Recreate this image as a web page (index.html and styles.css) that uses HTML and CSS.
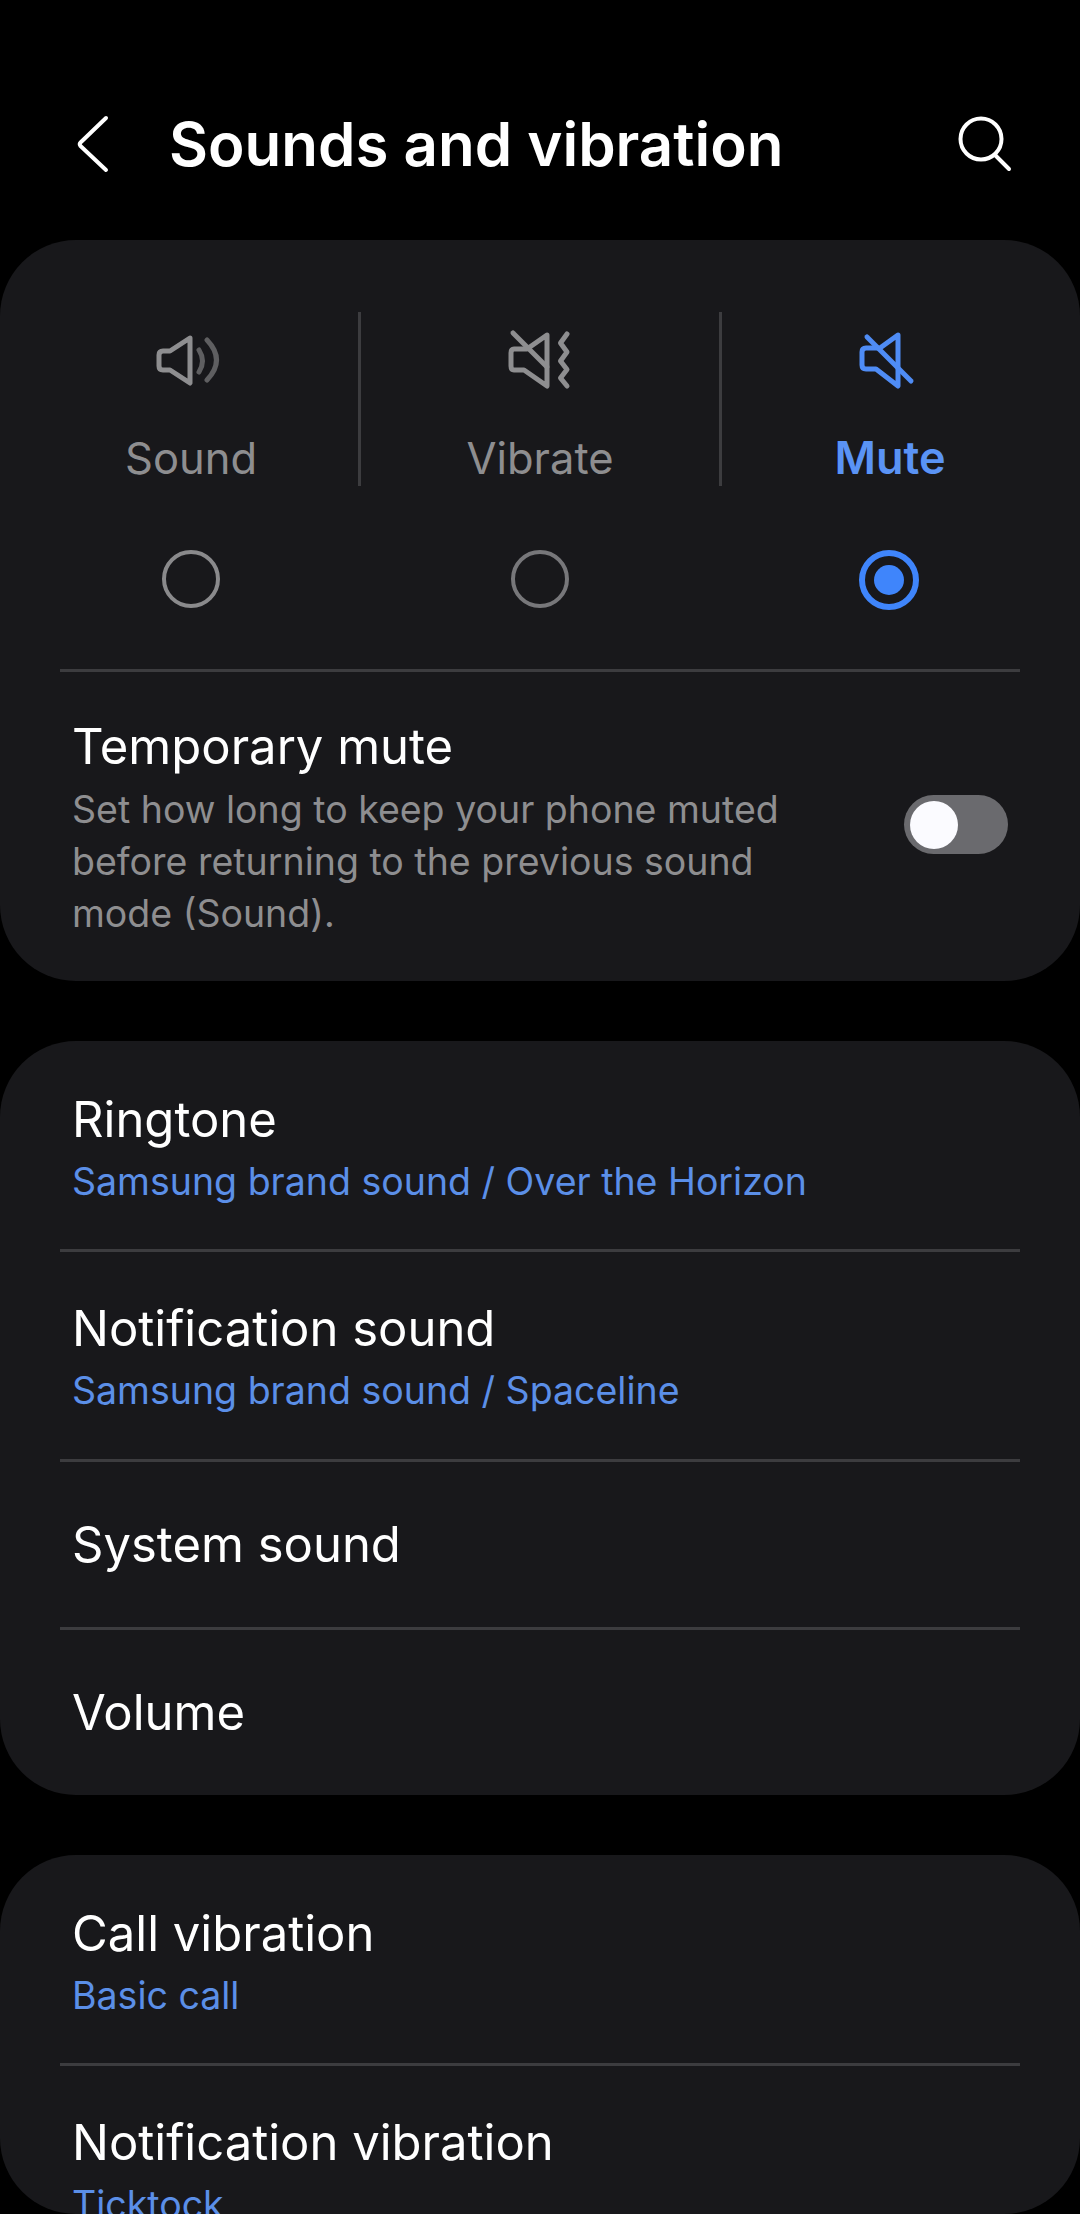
FILE: index.html
```html
<!DOCTYPE html>
<html lang="en">
<head>
    <meta charset="UTF-8">
    <meta name="viewport" content="width=device-width, initial-scale=1.0">
    <title>Sounds and vibration</title>
    <link rel="stylesheet" href="styles.css">
</head>
<body>
    <header class="topbar">
        <svg class="back-icon" width="36" height="60" viewBox="75 114 36 60">
            <path d="M106 118 L80.500 142.500 Q79 144 80.500 146 L106 170"/>
        </svg>
        <h1>Sounds and vibration</h1>
        <svg class="search-icon" width="60" height="60" viewBox="954 114 60 60">
            <circle cx="980" cy="139" r="20.500"/>
            <path d="M994 155 L1008 169"/>
        </svg>
    </header>

    <section class="card">
        <div class="modes">
            <div class="mode">
                <svg class="mode-icon" width="72" height="64" viewBox="155 328 72 64">
                    <path d="M190 338 L170 351 H163 Q159 351 159 355 V366 Q159 370 163 370 H170 L190 383 Z"/>
                    <path class="wave" d="M199 350 Q206 361 199 372"/>
                    <path class="wave" d="M207 340 Q226 360 207 380"/>
                </svg>
                <span class="mode-label">Sound</span>
                <span class="radio"></span>
            </div>
            <div class="mode mode-middle">
                <svg class="mode-icon" width="72" height="64" viewBox="504 328 72 64">
                    <path d="M547 335 L527 349 H514 Q511 349 511 353 V366 Q511 370 514 370 H524 L547 386 Z"/>
                    <path d="M513 333 L547 367"/>
                    <path d="M567 334 L560.500 343 L567 352 L560.500 361 L567 369.500 L560.500 378 L567 386"/>
                </svg>
                <span class="mode-label">Vibrate</span>
                <span class="radio radio-dim"></span>
            </div>
            <div class="mode mode-active">
                <svg class="mode-icon" width="72" height="64" viewBox="853 328 72 64">
                    <path d="M898 335 L880 348 H866 Q862 348 862 352 V365 Q862 369 866 369 H876 L898 386 Z"/>
                    <path d="M867 337 L911 381"/>
                </svg>
                <span class="mode-label">Mute</span>
                <span class="radio radio-on"></span>
            </div>
        </div>
        <div class="row row-switch">
            <div class="row-text">
                <div class="row-title">Temporary mute</div>
                <div class="row-desc">Set how long to keep your phone muted before returning to the previous sound mode (Sound).</div>
            </div>
            <span class="toggle"><span class="thumb"></span></span>
        </div>
    </section>

    <section class="card">
        <div class="row row-double">
            <div class="row-title">Ringtone</div>
            <div class="row-sub">Samsung brand sound / Over the Horizon</div>
        </div>
        <div class="row row-double">
            <div class="row-title">Notification sound</div>
            <div class="row-sub">Samsung brand sound / Spaceline</div>
        </div>
        <div class="row row-single">
            <div class="row-title">System sound</div>
        </div>
        <div class="row row-single">
            <div class="row-title">Volume</div>
        </div>
    </section>

    <section class="card card-last">
        <div class="row row-double">
            <div class="row-title">Call vibration</div>
            <div class="row-sub">Basic call</div>
        </div>
        <div class="row row-double">
            <div class="row-title">Notification vibration</div>
            <div class="row-sub">Ticktock</div>
        </div>
    </section>
</body>
</html>
```

FILE: styles.css
```css
html, body {
    margin: 0;
    padding: 0;
    background-color: #000;
}
body {
    width: 1080px;
    height: 2214px;
    overflow: hidden;
    font-family: Inter, "Noto Sans", sans-serif;
    color: #fff;
}
svg {
    display: block;
    fill: none;
    stroke-linecap: round;
    stroke-linejoin: round;
}

.topbar {
    height: 240px;
    box-sizing: border-box;
    padding: 114px 65px 0 75px;
    display: flex;
    align-items: flex-start;
}
.topbar h1 {
    flex: 1;
    margin: 0 0 0 58px;
    font-size: 60px;
    font-weight: 600;
    line-height: 60px;
}
.back-icon, .search-icon {
    stroke: #fff;
    stroke-width: 4;
}

.card {
    background: #18181b;
    border-radius: 76px;
    margin-bottom: 60px;
}
.card-last {
    height: 359px;
    overflow: hidden;
    margin-bottom: 0;
}

.modes {
    display: flex;
    padding: 72px 23px 0;
}
.mode {
    width: 336px;
    height: 357px;
    display: flex;
    flex-direction: column;
    align-items: center;
    position: relative;
}
.mode-middle {
    width: 362px;
}
.mode-middle::before, .mode-middle::after {
    content: "";
    position: absolute;
    top: 0;
    width: 3px;
    height: 174px;
    background: #3c3c3f;
}
.mode-middle::before {
    left: -1px;
}
.mode-middle::after {
    right: -1px;
}
.mode-icon {
    margin-top: 16px;
    stroke: #8e8e90;
    stroke-width: 5;
}
.mode-icon .wave {
    stroke: #5f5f61;
}
.mode-label {
    margin-top: 40px;
    font-size: 43.500px;
    line-height: 52px;
    color: #8e8e90;
}
.radio {
    margin-top: 66px;
    box-sizing: border-box;
    width: 58px;
    height: 58px;
    border: 4px solid #8a8a8c;
    border-radius: 50%;
}
.radio-dim {
    border-color: #77777a;
}
.mode-active .mode-icon {
    stroke: #4f8cf5;
}
.mode-active .mode-label {
    padding-left: 2px;
    color: #5a93f5;
    font-size: 45px;
    font-weight: 600;
}
.radio-on {
    width: 60px;
    height: 60px;
    border: 6px solid #3f85fb;
    padding: 9px;
    background: #3f85fb content-box;
}

.row {
    margin: 0 60px;
    padding: 0 12px;
    border-top: 3px solid #3c3c3f;
    box-sizing: border-box;
}
.card > .row:first-child {
    border-top: 0;
    height: 208px;
    padding-top: 49px;
}
.row-title {
    font-size: 49px;
    line-height: 60px;
}
.row-sub {
    margin-top: 6px;
    font-size: 37.500px;
    line-height: 52px;
    color: #5b8fe8;
}
.row-double {
    height: 210px;
    padding-top: 47px;
}
.row-single {
    height: 168px;
    display: flex;
    align-items: center;
}
.row-switch {
    height: 312px;
    padding: 45px 12px 0;
    display: flex;
    justify-content: space-between;
    align-items: flex-start;
}
.row-text {
    width: 730px;
}
.row-desc {
    margin-top: 6.500px;
    font-size: 37.500px;
    line-height: 52px;
    color: #8e8e90;
}
.toggle {
    margin: 78px 0 0 0;
    width: 104px;
    height: 59px;
    box-sizing: border-box;
    padding: 6px;
    border-radius: 30px;
    background: #6a6a6e;
}
.thumb {
    display: block;
    width: 48px;
    height: 48px;
    border-radius: 50%;
    background: #fbfbff;
}
```
